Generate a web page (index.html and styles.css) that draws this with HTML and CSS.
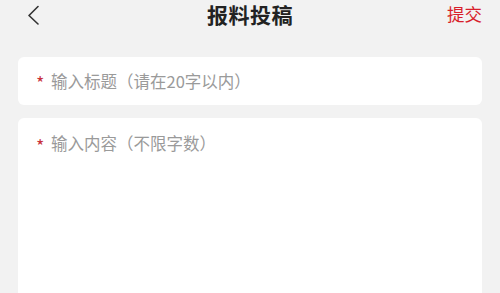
FILE: index.html
```html
<!DOCTYPE html>
<html lang="zh">
<head>
<meta charset="utf-8">
<link rel="stylesheet" href="styles.css">
</head>
<body>
<div class="page">
  <header class="nav">
    <div class="back">
      <svg width="14" height="20" viewBox="0 0 14 20"><path d="M12 1.5 L3 10.5 L12 19" fill="none" stroke="#333" stroke-width="1.6" stroke-linecap="round" stroke-linejoin="round"/></svg>
    </div>
    <h1 class="title">报料投稿</h1>
    <div class="submit">提交</div>
  </header>
  <div class="card card-title">
    <span class="req">*</span><span class="ph">输入标题（请在20字以内）</span>
  </div>
  <div class="card card-body">
    <span class="req">*</span><span class="ph">输入内容（不限字数）</span>
  </div>
</div>
</body>
</html>
```
FILE: styles.css
```css
html, body {
  margin: 0;
  padding: 0;
  background: #f2f2f2;
  font-family: "Noto Sans CJK SC", "Noto Sans", sans-serif;
  overflow: hidden;
}
.page {
  width: 500px;
  height: 293px;
  display: flex;
  flex-direction: column;
  padding: 0 18px;
  box-sizing: border-box;
}
.nav {
  height: 28px;
  display: flex;
  align-items: center;
  justify-content: space-between;
  margin-bottom: 29px;
}
.back {
  width: 60px;
  box-sizing: border-box;
  display: flex;
  align-items: center;
  padding-left: 8px;
  padding-top: 1px;
}
.back svg { display: block; }
.title {
  margin: 0;
  font-size: 21px;
  font-weight: 700;
  color: #222;
  line-height: 28px;
  letter-spacing: 0.5px;
}
.submit {
  width: 60px;
  text-align: right;
  font-size: 17.5px;
  color: #d81e2c;
  line-height: 28px;
}
.card {
  background: #fff;
  border-radius: 6px;
  display: flex;
  align-items: center;
  padding: 0 18px;
  box-sizing: border-box;
}
.card-title {
  height: 48px;
  margin-bottom: 13px;
}
.card-body {
  flex: 1;
  align-items: flex-start;
  padding-top: 13px;
  border-radius: 6px 6px 0 0;
}
.req {
  color: #c8323c;
  font-size: 18px;
  width: 15px;
  line-height: 24px;
  padding-top: 2px;
}
.ph {
  color: #9a9a9a;
  font-size: 16.5px;
  line-height: 24px;
}
```
